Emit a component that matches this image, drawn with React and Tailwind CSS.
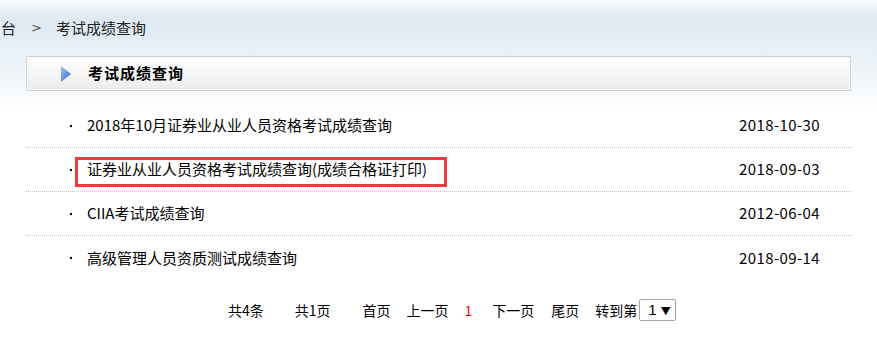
import React from "react";

const rows = [
  { title: "2018年10月证券业从业人员资格考试成绩查询", date: "2018-10-30" },
  { title: "证券业从业人员资格考试成绩查询(成绩合格证打印)", date: "2018-09-03", marked: true },
  { title: "CIIA考试成绩查询", date: "2012-06-04" },
  { title: "高级管理人员资质测试成绩查询", date: "2018-09-14" },
];

function PlayArrow() {
  return (
    <svg width="10" height="16" viewBox="0 0 10 16">
      <defs>
        <linearGradient id="arr" x1="0" y1="0" x2="1" y2="1">
          <stop offset="0" stopColor="#a9c9f0" />
          <stop offset="1" stopColor="#2a64c8" />
        </linearGradient>
      </defs>
      <polygon points="0,0 10,8 0,16" fill="url(#arr)" />
    </svg>
  );
}

export default function App() {
  return (
    <div className="w-[877px] min-h-[339px] bg-[linear-gradient(to_bottom,#f8fbfd_0px,#dde8f1_20px,#e9f1f7_55px,#ffffff_115px)] font-['Noto_Sans_CJK_SC',sans-serif] text-black">
      {/* breadcrumb */}
      <div className="flex h-[56px] items-center text-[15px] text-[#222]">
        <span className="ml-[1px]">台</span>
        <span className="ml-[15px] font-['DejaVu_Sans',sans-serif] text-[13px] text-[#555]">&gt;</span>
        <span className="ml-[14px]">考试成绩查询</span>
      </div>

      <div className="mx-[26px]">
        {/* panel header */}
        <div className="flex h-[35px] items-center border border-[#d4d4d4] bg-[linear-gradient(to_bottom,#ffffff,#ececec)] shadow-[inset_0_0_0_1px_#f7f7f7]">
          <span className="ml-[34px] flex">
            <PlayArrow />
          </span>
          <span className="ml-[17px] text-[15px] font-bold tracking-[1px]">考试成绩查询</span>
        </div>

        {/* list */}
        <div className="mt-[13px]">
          {rows.map((r, i) => (
            <div
              key={r.date + i}
              className={
                "relative flex h-[44px] items-center text-[15px] " +
                (i < rows.length - 1 ? "border-b border-dotted border-[#c4c4c4]" : "")
              }
            >
              <span className="ml-[44px] h-[2px] w-[2px] bg-black" />
              <span className="ml-[15px] flex-1">{r.title}</span>
              <span className="mr-[31px] text-[15px] tracking-[0.4px]">{r.date}</span>
              {r.marked && (
                <div className="absolute left-[49px] top-[9px] h-[30px] w-[372px] border-[3px] border-[#f23a3a]" />
              )}
            </div>
          ))}
        </div>
      </div>

      {/* pager */}
      <div className="flex h-[60px] items-center pl-[228px] text-[14px]">
        <span>共4条</span>
        <span className="ml-[31px]">共1页</span>
        <span className="ml-[32px]">首页</span>
        <span className="ml-[16px]">上一页</span>
        <span className="ml-[16px] text-[#ff0000]">1</span>
        <span className="ml-[20px]">下一页</span>
        <span className="ml-[17px]">尾页</span>
        <span className="ml-[16px]">转到第</span>
        <div className="ml-[2px] flex h-[22px] w-[37px] items-center rounded-[2px] border border-[#a6a6a6] bg-white">
          <span className="ml-[8px] font-['Liberation_Sans',sans-serif] text-[15px]">1</span>
          <span className="ml-[4px] text-[10px]">▼</span>
        </div>
      </div>
    </div>
  );
}
